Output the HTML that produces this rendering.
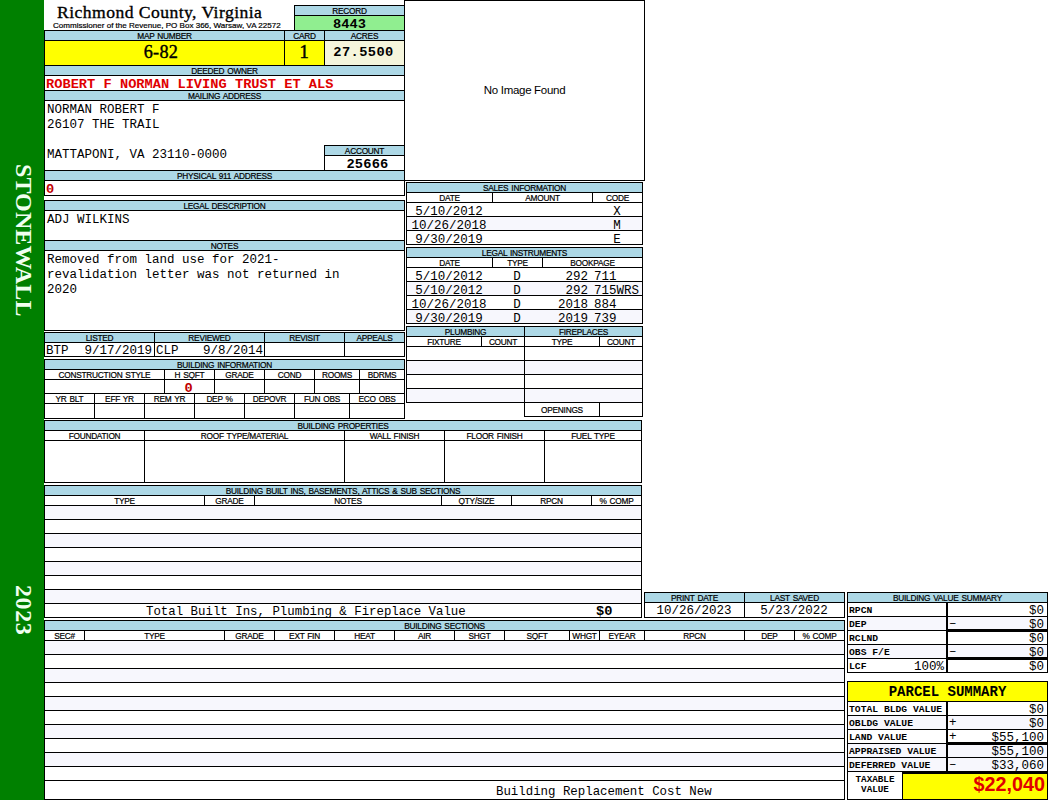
<!DOCTYPE html>
<html><head><meta charset="utf-8"><style>
html,body{margin:0;padding:0;background:#fff;}
body{width:1050px;height:800px;position:relative;overflow:hidden;}
body>div{position:absolute;}
.t{white-space:pre;overflow:visible;}
</style></head><body>
<div style="left:0px;top:0px;width:44px;height:800px;background:#008000"></div>
<div style="left:0;top:160px;width:44px;height:170px;"><div style="position:absolute;left:9.0px;top:4px;writing-mode:vertical-rl;font-family:'Liberation Serif',serif;font-weight:bold;font-size:24px;line-height:30px;color:#f0fff0;letter-spacing:0.1px">STONEWALL</div></div>
<div style="left:0;top:580px;width:44px;height:60px;"><div style="position:absolute;left:9.0px;top:5px;writing-mode:vertical-rl;font-family:'Liberation Serif',serif;font-weight:bold;font-size:24px;line-height:30px;color:#f0fff0;letter-spacing:0.6px">2023</div></div>
<div class="t" style="left:57px;width:243px;top:-3.00px;height:30px;line-height:30px;font-family:'Liberation Serif',serif;font-size:17.6px;font-weight:normal;color:#000;text-align:left;letter-spacing:0.45px;-webkit-text-stroke:0.35px #000">Richmond County, Virginia</div>
<div class="t" style="left:53px;width:247px;top:10.50px;height:30px;line-height:30px;font-family:'Liberation Sans',sans-serif;font-size:8.05px;font-weight:normal;color:#000;text-align:left;-webkit-text-stroke:0.2px #000">Commissioner of the Revenue, PO Box 366, Warsaw, VA 22572</div>
<div style="left:295px;top:6px;width:109px;height:9px;background:#add8e6"></div>
<div style="left:295px;top:16px;width:109px;height:14px;background:#90ee90"></div>
<div style="left:294px;top:5px;width:111px;height:1px;background:#000"></div>
<div style="left:294px;top:30px;width:111px;height:1px;background:#000"></div>
<div style="left:294px;top:5px;width:1px;height:26px;background:#000"></div>
<div style="left:404px;top:5px;width:1px;height:26px;background:#000"></div>
<div style="left:294px;top:15px;width:111px;height:1px;background:#000"></div>
<div class="t" style="left:295px;width:109px;top:-4.00px;height:30px;line-height:30px;font-family:'Liberation Sans',sans-serif;font-size:8.3px;font-weight:normal;color:#000;text-align:center;letter-spacing:-0.25px;word-spacing:0.9px;-webkit-text-stroke:0.2px #000;">RECORD</div>
<div class="t" style="left:295px;width:109px;top:9.50px;height:30px;line-height:30px;font-family:'Liberation Mono',monospace;font-size:13.7px;font-weight:bold;color:#000;text-align:center;">8443</div>
<div style="left:45px;top:31px;width:359px;height:9px;background:#add8e6"></div>
<div style="left:45px;top:41px;width:279px;height:24px;background:#ffff00"></div>
<div style="left:325px;top:41px;width:79px;height:24px;background:#f5f5dc"></div>
<div style="left:44px;top:30px;width:361px;height:1px;background:#000"></div>
<div style="left:44px;top:65px;width:361px;height:1px;background:#000"></div>
<div style="left:44px;top:30px;width:1px;height:36px;background:#000"></div>
<div style="left:404px;top:30px;width:1px;height:36px;background:#000"></div>
<div style="left:44px;top:40px;width:361px;height:1px;background:#000"></div>
<div style="left:284px;top:30px;width:1px;height:36px;background:#000"></div>
<div style="left:324px;top:30px;width:1px;height:36px;background:#000"></div>
<div class="t" style="left:45px;width:239px;top:21.00px;height:30px;line-height:30px;font-family:'Liberation Sans',sans-serif;font-size:8.3px;font-weight:normal;color:#000;text-align:center;letter-spacing:-0.25px;word-spacing:0.9px;-webkit-text-stroke:0.2px #000;">MAP NUMBER</div>
<div class="t" style="left:285px;width:39px;top:21.00px;height:30px;line-height:30px;font-family:'Liberation Sans',sans-serif;font-size:8.3px;font-weight:normal;color:#000;text-align:center;letter-spacing:-0.25px;word-spacing:0.9px;-webkit-text-stroke:0.2px #000;">CARD</div>
<div class="t" style="left:325px;width:79px;top:21.00px;height:30px;line-height:30px;font-family:'Liberation Sans',sans-serif;font-size:8.3px;font-weight:normal;color:#000;text-align:center;letter-spacing:-0.25px;word-spacing:0.9px;-webkit-text-stroke:0.2px #000;">ACRES</div>
<div class="t" style="left:38px;width:246px;top:37.00px;height:30px;line-height:30px;font-family:'Liberation Serif',serif;font-size:18.2px;font-weight:normal;color:#000;text-align:center;letter-spacing:0.3px;-webkit-text-stroke:0.4px #000">6-82</div>
<div class="t" style="left:284px;width:40px;top:37.00px;height:30px;line-height:30px;font-family:'Liberation Serif',serif;font-size:18.5px;font-weight:normal;color:#000;text-align:center;-webkit-text-stroke:0.5px #000">1</div>
<div class="t" style="left:323px;width:81px;top:37.50px;height:30px;line-height:30px;font-family:'Liberation Mono',monospace;font-size:13.7px;font-weight:bold;color:#000;text-align:center;letter-spacing:0.4px">27.5500</div>
<div style="left:45px;top:66px;width:359px;height:9px;background:#add8e6"></div>
<div class="t" style="left:45px;width:359px;top:56.00px;height:30px;line-height:30px;font-family:'Liberation Sans',sans-serif;font-size:8.3px;font-weight:normal;color:#000;text-align:center;letter-spacing:-0.25px;word-spacing:0.9px;-webkit-text-stroke:0.2px #000;">DEEDED OWNER</div>
<div style="left:44px;top:65px;width:361px;height:1px;background:#000"></div>
<div style="left:44px;top:90px;width:361px;height:1px;background:#000"></div>
<div style="left:44px;top:65px;width:1px;height:26px;background:#000"></div>
<div style="left:404px;top:65px;width:1px;height:26px;background:#000"></div>
<div style="left:44px;top:75px;width:361px;height:1px;background:#000"></div>
<div class="t" style="left:46px;width:358px;top:69.50px;height:30px;line-height:30px;font-family:'Liberation Mono',monospace;font-size:13.7px;font-weight:bold;color:#e00000;text-align:left;">ROBERT F NORMAN LIVING TRUST ET ALS</div>
<div style="left:45px;top:91px;width:359px;height:9px;background:#add8e6"></div>
<div class="t" style="left:45px;width:359px;top:81.00px;height:30px;line-height:30px;font-family:'Liberation Sans',sans-serif;font-size:8.3px;font-weight:normal;color:#000;text-align:center;letter-spacing:-0.25px;word-spacing:0.9px;-webkit-text-stroke:0.2px #000;">MAILING ADDRESS</div>
<div style="left:44px;top:90px;width:361px;height:1px;background:#000"></div>
<div style="left:44px;top:170px;width:361px;height:1px;background:#000"></div>
<div style="left:44px;top:90px;width:1px;height:81px;background:#000"></div>
<div style="left:404px;top:90px;width:1px;height:81px;background:#000"></div>
<div style="left:44px;top:100px;width:361px;height:1px;background:#000"></div>
<div class="t" style="left:47px;width:283px;top:95.00px;height:30px;line-height:30px;font-family:'Liberation Mono',monospace;font-size:12.5px;font-weight:normal;color:#000;text-align:left;">NORMAN ROBERT F</div>
<div class="t" style="left:47px;width:283px;top:110.00px;height:30px;line-height:30px;font-family:'Liberation Mono',monospace;font-size:12.5px;font-weight:normal;color:#000;text-align:left;">26107 THE TRAIL</div>
<div class="t" style="left:47px;width:283px;top:125.00px;height:30px;line-height:30px;font-family:'Liberation Mono',monospace;font-size:12.5px;font-weight:normal;color:#000;text-align:left;"></div>
<div class="t" style="left:47px;width:283px;top:140.00px;height:30px;line-height:30px;font-family:'Liberation Mono',monospace;font-size:12.5px;font-weight:normal;color:#000;text-align:left;">MATTAPONI, VA 23110-0000</div>
<div style="left:325px;top:146px;width:79px;height:9px;background:#add8e6"></div>
<div style="left:324px;top:145px;width:81px;height:1px;background:#000"></div>
<div style="left:324px;top:170px;width:81px;height:1px;background:#000"></div>
<div style="left:324px;top:145px;width:1px;height:26px;background:#000"></div>
<div style="left:404px;top:145px;width:1px;height:26px;background:#000"></div>
<div style="left:324px;top:155px;width:81px;height:1px;background:#000"></div>
<div class="t" style="left:325px;width:79px;top:136.00px;height:30px;line-height:30px;font-family:'Liberation Sans',sans-serif;font-size:8.3px;font-weight:normal;color:#000;text-align:center;letter-spacing:-0.25px;word-spacing:0.9px;-webkit-text-stroke:0.2px #000;">ACCOUNT</div>
<div class="t" style="left:331px;width:73px;top:149.50px;height:30px;line-height:30px;font-family:'Liberation Mono',monospace;font-size:13.7px;font-weight:bold;color:#000;text-align:center;letter-spacing:0.2px">25666</div>
<div style="left:45px;top:171px;width:359px;height:9px;background:#add8e6"></div>
<div class="t" style="left:45px;width:359px;top:161.00px;height:30px;line-height:30px;font-family:'Liberation Sans',sans-serif;font-size:8.3px;font-weight:normal;color:#000;text-align:center;letter-spacing:-0.25px;word-spacing:0.9px;-webkit-text-stroke:0.2px #000;">PHYSICAL 911 ADDRESS</div>
<div style="left:44px;top:170px;width:361px;height:1px;background:#000"></div>
<div style="left:44px;top:195px;width:361px;height:1px;background:#000"></div>
<div style="left:44px;top:170px;width:1px;height:26px;background:#000"></div>
<div style="left:404px;top:170px;width:1px;height:26px;background:#000"></div>
<div style="left:44px;top:180px;width:361px;height:1px;background:#000"></div>
<div class="t" style="left:46px;width:54px;top:174.50px;height:30px;line-height:30px;font-family:'Liberation Mono',monospace;font-size:13.7px;font-weight:bold;color:#c00000;text-align:left;">0</div>
<div style="left:45px;top:201px;width:359px;height:9px;background:#add8e6"></div>
<div class="t" style="left:45px;width:359px;top:191.00px;height:30px;line-height:30px;font-family:'Liberation Sans',sans-serif;font-size:8.3px;font-weight:normal;color:#000;text-align:center;letter-spacing:-0.25px;word-spacing:0.9px;-webkit-text-stroke:0.2px #000;">LEGAL DESCRIPTION</div>
<div style="left:44px;top:200px;width:361px;height:1px;background:#000"></div>
<div style="left:44px;top:240px;width:361px;height:1px;background:#000"></div>
<div style="left:44px;top:200px;width:1px;height:41px;background:#000"></div>
<div style="left:404px;top:200px;width:1px;height:41px;background:#000"></div>
<div style="left:44px;top:210px;width:361px;height:1px;background:#000"></div>
<div class="t" style="left:47px;width:357px;top:205.00px;height:30px;line-height:30px;font-family:'Liberation Mono',monospace;font-size:12.5px;font-weight:normal;color:#000;text-align:left;">ADJ WILKINS</div>
<div style="left:45px;top:241px;width:359px;height:9px;background:#add8e6"></div>
<div class="t" style="left:45px;width:359px;top:231.00px;height:30px;line-height:30px;font-family:'Liberation Sans',sans-serif;font-size:8.3px;font-weight:normal;color:#000;text-align:center;letter-spacing:-0.25px;word-spacing:0.9px;-webkit-text-stroke:0.2px #000;">NOTES</div>
<div style="left:44px;top:240px;width:361px;height:1px;background:#000"></div>
<div style="left:44px;top:330px;width:361px;height:1px;background:#000"></div>
<div style="left:44px;top:240px;width:1px;height:91px;background:#000"></div>
<div style="left:404px;top:240px;width:1px;height:91px;background:#000"></div>
<div style="left:44px;top:250px;width:361px;height:1px;background:#000"></div>
<div class="t" style="left:47px;width:357px;top:245.00px;height:30px;line-height:30px;font-family:'Liberation Mono',monospace;font-size:12.5px;font-weight:normal;color:#000;text-align:left;">Removed from land use for 2021-</div>
<div class="t" style="left:47px;width:357px;top:260.00px;height:30px;line-height:30px;font-family:'Liberation Mono',monospace;font-size:12.5px;font-weight:normal;color:#000;text-align:left;">revalidation letter was not returned in</div>
<div class="t" style="left:47px;width:357px;top:275.00px;height:30px;line-height:30px;font-family:'Liberation Mono',monospace;font-size:12.5px;font-weight:normal;color:#000;text-align:left;">2020</div>
<div style="left:45px;top:333px;width:359px;height:9px;background:#add8e6"></div>
<div style="left:44px;top:332px;width:361px;height:1px;background:#000"></div>
<div style="left:44px;top:356px;width:361px;height:1px;background:#000"></div>
<div style="left:44px;top:332px;width:1px;height:25px;background:#000"></div>
<div style="left:404px;top:332px;width:1px;height:25px;background:#000"></div>
<div style="left:44px;top:342px;width:361px;height:1px;background:#000"></div>
<div style="left:154px;top:332px;width:1px;height:25px;background:#000"></div>
<div style="left:264px;top:332px;width:1px;height:25px;background:#000"></div>
<div style="left:344px;top:332px;width:1px;height:25px;background:#000"></div>
<div class="t" style="left:45px;width:109px;top:323.00px;height:30px;line-height:30px;font-family:'Liberation Sans',sans-serif;font-size:8.3px;font-weight:normal;color:#000;text-align:center;letter-spacing:-0.25px;word-spacing:0.9px;-webkit-text-stroke:0.2px #000;">LISTED</div>
<div class="t" style="left:155px;width:109px;top:323.00px;height:30px;line-height:30px;font-family:'Liberation Sans',sans-serif;font-size:8.3px;font-weight:normal;color:#000;text-align:center;letter-spacing:-0.25px;word-spacing:0.9px;-webkit-text-stroke:0.2px #000;">REVIEWED</div>
<div class="t" style="left:265px;width:79px;top:323.00px;height:30px;line-height:30px;font-family:'Liberation Sans',sans-serif;font-size:8.3px;font-weight:normal;color:#000;text-align:center;letter-spacing:-0.25px;word-spacing:0.9px;-webkit-text-stroke:0.2px #000;">REVISIT</div>
<div class="t" style="left:345px;width:59px;top:323.00px;height:30px;line-height:30px;font-family:'Liberation Sans',sans-serif;font-size:8.3px;font-weight:normal;color:#000;text-align:center;letter-spacing:-0.25px;word-spacing:0.9px;-webkit-text-stroke:0.2px #000;">APPEALS</div>
<div class="t" style="left:46px;width:108px;top:336.00px;height:30px;line-height:30px;font-family:'Liberation Mono',monospace;font-size:12.5px;font-weight:normal;color:#000;text-align:left;">BTP</div>
<div class="t" style="left:60px;width:92px;top:336.00px;height:30px;line-height:30px;font-family:'Liberation Mono',monospace;font-size:12.5px;font-weight:normal;color:#000;text-align:right;">9/17/2019</div>
<div class="t" style="left:156px;width:108px;top:336.00px;height:30px;line-height:30px;font-family:'Liberation Mono',monospace;font-size:12.5px;font-weight:normal;color:#000;text-align:left;">CLP</div>
<div class="t" style="left:170px;width:93px;top:336.00px;height:30px;line-height:30px;font-family:'Liberation Mono',monospace;font-size:12.5px;font-weight:normal;color:#000;text-align:right;">9/8/2014</div>
<div style="left:45px;top:360px;width:359px;height:9px;background:#add8e6"></div>
<div class="t" style="left:45px;width:359px;top:350.00px;height:30px;line-height:30px;font-family:'Liberation Sans',sans-serif;font-size:8.3px;font-weight:normal;color:#000;text-align:center;letter-spacing:-0.25px;word-spacing:0.9px;-webkit-text-stroke:0.2px #000;">BUILDING INFORMATION</div>
<div style="left:44px;top:359px;width:361px;height:1px;background:#000"></div>
<div style="left:44px;top:418px;width:361px;height:1px;background:#000"></div>
<div style="left:44px;top:359px;width:1px;height:60px;background:#000"></div>
<div style="left:404px;top:359px;width:1px;height:60px;background:#000"></div>
<div style="left:44px;top:369px;width:361px;height:1px;background:#000"></div>
<div style="left:44px;top:379px;width:361px;height:1px;background:#000"></div>
<div style="left:44px;top:393px;width:361px;height:1px;background:#000"></div>
<div style="left:44px;top:403px;width:361px;height:1px;background:#000"></div>
<div style="left:164px;top:369px;width:1px;height:25px;background:#000"></div>
<div style="left:214px;top:369px;width:1px;height:25px;background:#000"></div>
<div style="left:264px;top:369px;width:1px;height:25px;background:#000"></div>
<div style="left:314px;top:369px;width:1px;height:25px;background:#000"></div>
<div style="left:359px;top:369px;width:1px;height:25px;background:#000"></div>
<div style="left:94px;top:393px;width:1px;height:26px;background:#000"></div>
<div style="left:144px;top:393px;width:1px;height:26px;background:#000"></div>
<div style="left:194px;top:393px;width:1px;height:26px;background:#000"></div>
<div style="left:244px;top:393px;width:1px;height:26px;background:#000"></div>
<div style="left:294px;top:393px;width:1px;height:26px;background:#000"></div>
<div style="left:349px;top:393px;width:1px;height:26px;background:#000"></div>
<div class="t" style="left:45px;width:119px;top:360.00px;height:30px;line-height:30px;font-family:'Liberation Sans',sans-serif;font-size:8.3px;font-weight:normal;color:#000;text-align:center;letter-spacing:-0.25px;word-spacing:0.9px;-webkit-text-stroke:0.2px #000;">CONSTRUCTION STYLE</div>
<div class="t" style="left:165px;width:49px;top:360.00px;height:30px;line-height:30px;font-family:'Liberation Sans',sans-serif;font-size:8.3px;font-weight:normal;color:#000;text-align:center;letter-spacing:-0.25px;word-spacing:0.9px;-webkit-text-stroke:0.2px #000;">H SQFT</div>
<div class="t" style="left:215px;width:49px;top:360.00px;height:30px;line-height:30px;font-family:'Liberation Sans',sans-serif;font-size:8.3px;font-weight:normal;color:#000;text-align:center;letter-spacing:-0.25px;word-spacing:0.9px;-webkit-text-stroke:0.2px #000;">GRADE</div>
<div class="t" style="left:265px;width:49px;top:360.00px;height:30px;line-height:30px;font-family:'Liberation Sans',sans-serif;font-size:8.3px;font-weight:normal;color:#000;text-align:center;letter-spacing:-0.25px;word-spacing:0.9px;-webkit-text-stroke:0.2px #000;">COND</div>
<div class="t" style="left:315px;width:44px;top:360.00px;height:30px;line-height:30px;font-family:'Liberation Sans',sans-serif;font-size:8.3px;font-weight:normal;color:#000;text-align:center;letter-spacing:-0.25px;word-spacing:0.9px;-webkit-text-stroke:0.2px #000;">ROOMS</div>
<div class="t" style="left:360px;width:44px;top:360.00px;height:30px;line-height:30px;font-family:'Liberation Sans',sans-serif;font-size:8.3px;font-weight:normal;color:#000;text-align:center;letter-spacing:-0.25px;word-spacing:0.9px;-webkit-text-stroke:0.2px #000;">BDRMS</div>
<div class="t" style="left:45px;width:49px;top:384.00px;height:30px;line-height:30px;font-family:'Liberation Sans',sans-serif;font-size:8.3px;font-weight:normal;color:#000;text-align:center;letter-spacing:-0.25px;word-spacing:0.9px;-webkit-text-stroke:0.2px #000;">YR BLT</div>
<div class="t" style="left:95px;width:49px;top:384.00px;height:30px;line-height:30px;font-family:'Liberation Sans',sans-serif;font-size:8.3px;font-weight:normal;color:#000;text-align:center;letter-spacing:-0.25px;word-spacing:0.9px;-webkit-text-stroke:0.2px #000;">EFF YR</div>
<div class="t" style="left:145px;width:49px;top:384.00px;height:30px;line-height:30px;font-family:'Liberation Sans',sans-serif;font-size:8.3px;font-weight:normal;color:#000;text-align:center;letter-spacing:-0.25px;word-spacing:0.9px;-webkit-text-stroke:0.2px #000;">REM YR</div>
<div class="t" style="left:195px;width:49px;top:384.00px;height:30px;line-height:30px;font-family:'Liberation Sans',sans-serif;font-size:8.3px;font-weight:normal;color:#000;text-align:center;letter-spacing:-0.25px;word-spacing:0.9px;-webkit-text-stroke:0.2px #000;">DEP %</div>
<div class="t" style="left:245px;width:49px;top:384.00px;height:30px;line-height:30px;font-family:'Liberation Sans',sans-serif;font-size:8.3px;font-weight:normal;color:#000;text-align:center;letter-spacing:-0.25px;word-spacing:0.9px;-webkit-text-stroke:0.2px #000;">DEPOVR</div>
<div class="t" style="left:295px;width:54px;top:384.00px;height:30px;line-height:30px;font-family:'Liberation Sans',sans-serif;font-size:8.3px;font-weight:normal;color:#000;text-align:center;letter-spacing:-0.25px;word-spacing:0.9px;-webkit-text-stroke:0.2px #000;">FUN OBS</div>
<div class="t" style="left:350px;width:54px;top:384.00px;height:30px;line-height:30px;font-family:'Liberation Sans',sans-serif;font-size:8.3px;font-weight:normal;color:#000;text-align:center;letter-spacing:-0.25px;word-spacing:0.9px;-webkit-text-stroke:0.2px #000;">ECO OBS</div>
<div class="t" style="left:163px;width:51px;top:373.50px;height:30px;line-height:30px;font-family:'Liberation Mono',monospace;font-size:13.7px;font-weight:bold;color:#c00000;text-align:center;">0</div>
<div style="left:404px;top:0px;width:241px;height:1px;background:#000"></div>
<div style="left:404px;top:180px;width:241px;height:1px;background:#000"></div>
<div style="left:404px;top:0px;width:1px;height:181px;background:#000"></div>
<div style="left:644px;top:0px;width:1px;height:181px;background:#000"></div>
<div class="t" style="left:405px;width:239px;top:75.00px;height:30px;line-height:30px;font-family:'Liberation Sans',sans-serif;font-size:11.5px;font-weight:normal;color:#000;text-align:center;letter-spacing:-0.3px">No Image Found</div>
<div style="left:407px;top:193px;width:235px;height:9px;background:#fff"></div>
<div style="left:407px;top:217px;width:235px;height:13px;background:#f7f7fd"></div>
<div style="left:407px;top:183px;width:235px;height:9px;background:#add8e6"></div>
<div class="t" style="left:407px;width:235px;top:173.00px;height:30px;line-height:30px;font-family:'Liberation Sans',sans-serif;font-size:8.3px;font-weight:normal;color:#000;text-align:center;letter-spacing:-0.25px;word-spacing:0.9px;-webkit-text-stroke:0.2px #000;">SALES INFORMATION</div>
<div style="left:406px;top:182px;width:237px;height:1px;background:#000"></div>
<div style="left:406px;top:244px;width:237px;height:1px;background:#000"></div>
<div style="left:406px;top:182px;width:1px;height:63px;background:#000"></div>
<div style="left:642px;top:182px;width:1px;height:63px;background:#000"></div>
<div style="left:406px;top:192px;width:237px;height:1px;background:#000"></div>
<div style="left:406px;top:202px;width:237px;height:1px;background:#000"></div>
<div style="left:406px;top:216px;width:237px;height:1px;background:#000"></div>
<div style="left:406px;top:230px;width:237px;height:1px;background:#000"></div>
<div style="left:492px;top:192px;width:1px;height:11px;background:#000"></div>
<div style="left:592px;top:192px;width:1px;height:11px;background:#000"></div>
<div class="t" style="left:407px;width:85px;top:183.00px;height:30px;line-height:30px;font-family:'Liberation Sans',sans-serif;font-size:8.3px;font-weight:normal;color:#000;text-align:center;letter-spacing:-0.25px;word-spacing:0.9px;-webkit-text-stroke:0.2px #000;">DATE</div>
<div class="t" style="left:493px;width:99px;top:183.00px;height:30px;line-height:30px;font-family:'Liberation Sans',sans-serif;font-size:8.3px;font-weight:normal;color:#000;text-align:center;letter-spacing:-0.25px;word-spacing:0.9px;-webkit-text-stroke:0.2px #000;">AMOUNT</div>
<div class="t" style="left:593px;width:49px;top:183.00px;height:30px;line-height:30px;font-family:'Liberation Sans',sans-serif;font-size:8.3px;font-weight:normal;color:#000;text-align:center;letter-spacing:-0.25px;word-spacing:0.9px;-webkit-text-stroke:0.2px #000;">CODE</div>
<div class="t" style="left:406px;width:86px;top:197.00px;height:30px;line-height:30px;font-family:'Liberation Mono',monospace;font-size:12.5px;font-weight:normal;color:#000;text-align:center;">5/10/2012</div>
<div class="t" style="left:592px;width:50px;top:197.00px;height:30px;line-height:30px;font-family:'Liberation Mono',monospace;font-size:12.5px;font-weight:normal;color:#000;text-align:center;">X</div>
<div class="t" style="left:406px;width:86px;top:211.00px;height:30px;line-height:30px;font-family:'Liberation Mono',monospace;font-size:12.5px;font-weight:normal;color:#000;text-align:center;">10/26/2018</div>
<div class="t" style="left:592px;width:50px;top:211.00px;height:30px;line-height:30px;font-family:'Liberation Mono',monospace;font-size:12.5px;font-weight:normal;color:#000;text-align:center;">M</div>
<div class="t" style="left:406px;width:86px;top:225.00px;height:30px;line-height:30px;font-family:'Liberation Mono',monospace;font-size:12.5px;font-weight:normal;color:#000;text-align:center;">9/30/2019</div>
<div class="t" style="left:592px;width:50px;top:225.00px;height:30px;line-height:30px;font-family:'Liberation Mono',monospace;font-size:12.5px;font-weight:normal;color:#000;text-align:center;">E</div>
<div style="left:407px;top:282px;width:235px;height:13px;background:#f7f7fd"></div>
<div style="left:407px;top:310px;width:235px;height:13px;background:#f7f7fd"></div>
<div style="left:407px;top:248px;width:235px;height:9px;background:#add8e6"></div>
<div class="t" style="left:407px;width:235px;top:238.00px;height:30px;line-height:30px;font-family:'Liberation Sans',sans-serif;font-size:8.3px;font-weight:normal;color:#000;text-align:center;letter-spacing:-0.25px;word-spacing:0.9px;-webkit-text-stroke:0.2px #000;">LEGAL INSTRUMENTS</div>
<div style="left:406px;top:247px;width:237px;height:1px;background:#000"></div>
<div style="left:406px;top:323px;width:237px;height:1px;background:#000"></div>
<div style="left:406px;top:247px;width:1px;height:77px;background:#000"></div>
<div style="left:642px;top:247px;width:1px;height:77px;background:#000"></div>
<div style="left:406px;top:257px;width:237px;height:1px;background:#000"></div>
<div style="left:406px;top:267px;width:237px;height:1px;background:#000"></div>
<div style="left:406px;top:281px;width:237px;height:1px;background:#000"></div>
<div style="left:406px;top:295px;width:237px;height:1px;background:#000"></div>
<div style="left:406px;top:309px;width:237px;height:1px;background:#000"></div>
<div style="left:492px;top:257px;width:1px;height:11px;background:#000"></div>
<div style="left:542px;top:257px;width:1px;height:11px;background:#000"></div>
<div class="t" style="left:407px;width:85px;top:248.00px;height:30px;line-height:30px;font-family:'Liberation Sans',sans-serif;font-size:8.3px;font-weight:normal;color:#000;text-align:center;letter-spacing:-0.25px;word-spacing:0.9px;-webkit-text-stroke:0.2px #000;">DATE</div>
<div class="t" style="left:493px;width:49px;top:248.00px;height:30px;line-height:30px;font-family:'Liberation Sans',sans-serif;font-size:8.3px;font-weight:normal;color:#000;text-align:center;letter-spacing:-0.25px;word-spacing:0.9px;-webkit-text-stroke:0.2px #000;">TYPE</div>
<div class="t" style="left:543px;width:99px;top:248.00px;height:30px;line-height:30px;font-family:'Liberation Sans',sans-serif;font-size:8.3px;font-weight:normal;color:#000;text-align:center;letter-spacing:-0.25px;word-spacing:0.9px;-webkit-text-stroke:0.2px #000;">BOOKPAGE</div>
<div class="t" style="left:406px;width:86px;top:262.00px;height:30px;line-height:30px;font-family:'Liberation Mono',monospace;font-size:12.5px;font-weight:normal;color:#000;text-align:center;">5/10/2012</div>
<div class="t" style="left:492px;width:50px;top:262.00px;height:30px;line-height:30px;font-family:'Liberation Mono',monospace;font-size:12.5px;font-weight:normal;color:#000;text-align:center;">D</div>
<div class="t" style="left:500px;width:88px;top:262.00px;height:30px;line-height:30px;font-family:'Liberation Mono',monospace;font-size:12.5px;font-weight:normal;color:#000;text-align:right;">292</div>
<div class="t" style="left:594px;width:66px;top:262.00px;height:30px;line-height:30px;font-family:'Liberation Mono',monospace;font-size:12.5px;font-weight:normal;color:#000;text-align:left;">711</div>
<div class="t" style="left:406px;width:86px;top:276.00px;height:30px;line-height:30px;font-family:'Liberation Mono',monospace;font-size:12.5px;font-weight:normal;color:#000;text-align:center;">5/10/2012</div>
<div class="t" style="left:492px;width:50px;top:276.00px;height:30px;line-height:30px;font-family:'Liberation Mono',monospace;font-size:12.5px;font-weight:normal;color:#000;text-align:center;">D</div>
<div class="t" style="left:500px;width:88px;top:276.00px;height:30px;line-height:30px;font-family:'Liberation Mono',monospace;font-size:12.5px;font-weight:normal;color:#000;text-align:right;">292</div>
<div class="t" style="left:594px;width:66px;top:276.00px;height:30px;line-height:30px;font-family:'Liberation Mono',monospace;font-size:12.5px;font-weight:normal;color:#000;text-align:left;">715WRS</div>
<div class="t" style="left:406px;width:86px;top:290.00px;height:30px;line-height:30px;font-family:'Liberation Mono',monospace;font-size:12.5px;font-weight:normal;color:#000;text-align:center;">10/26/2018</div>
<div class="t" style="left:492px;width:50px;top:290.00px;height:30px;line-height:30px;font-family:'Liberation Mono',monospace;font-size:12.5px;font-weight:normal;color:#000;text-align:center;">D</div>
<div class="t" style="left:500px;width:88px;top:290.00px;height:30px;line-height:30px;font-family:'Liberation Mono',monospace;font-size:12.5px;font-weight:normal;color:#000;text-align:right;">2018</div>
<div class="t" style="left:594px;width:66px;top:290.00px;height:30px;line-height:30px;font-family:'Liberation Mono',monospace;font-size:12.5px;font-weight:normal;color:#000;text-align:left;">884</div>
<div class="t" style="left:406px;width:86px;top:304.00px;height:30px;line-height:30px;font-family:'Liberation Mono',monospace;font-size:12.5px;font-weight:normal;color:#000;text-align:center;">9/30/2019</div>
<div class="t" style="left:492px;width:50px;top:304.00px;height:30px;line-height:30px;font-family:'Liberation Mono',monospace;font-size:12.5px;font-weight:normal;color:#000;text-align:center;">D</div>
<div class="t" style="left:500px;width:88px;top:304.00px;height:30px;line-height:30px;font-family:'Liberation Mono',monospace;font-size:12.5px;font-weight:normal;color:#000;text-align:right;">2019</div>
<div class="t" style="left:594px;width:66px;top:304.00px;height:30px;line-height:30px;font-family:'Liberation Mono',monospace;font-size:12.5px;font-weight:normal;color:#000;text-align:left;">739</div>
<div style="left:407px;top:361px;width:235px;height:13px;background:#f7f7fd"></div>
<div style="left:407px;top:389px;width:235px;height:13px;background:#f7f7fd"></div>
<div style="left:407px;top:327px;width:235px;height:9px;background:#add8e6"></div>
<div style="left:406px;top:326px;width:237px;height:1px;background:#000"></div>
<div style="left:406px;top:336px;width:237px;height:1px;background:#000"></div>
<div style="left:406px;top:346px;width:237px;height:1px;background:#000"></div>
<div style="left:406px;top:360px;width:237px;height:1px;background:#000"></div>
<div style="left:406px;top:374px;width:237px;height:1px;background:#000"></div>
<div style="left:406px;top:388px;width:237px;height:1px;background:#000"></div>
<div style="left:406px;top:402px;width:237px;height:1px;background:#000"></div>
<div style="left:524px;top:416px;width:119px;height:1px;background:#000"></div>
<div style="left:406px;top:326px;width:1px;height:77px;background:#000"></div>
<div style="left:524px;top:326px;width:1px;height:91px;background:#000"></div>
<div style="left:642px;top:326px;width:1px;height:91px;background:#000"></div>
<div style="left:481px;top:336px;width:1px;height:11px;background:#000"></div>
<div style="left:599px;top:336px;width:1px;height:11px;background:#000"></div>
<div style="left:599px;top:402px;width:1px;height:15px;background:#000"></div>
<div class="t" style="left:407px;width:117px;top:317.00px;height:30px;line-height:30px;font-family:'Liberation Sans',sans-serif;font-size:8.3px;font-weight:normal;color:#000;text-align:center;letter-spacing:-0.25px;word-spacing:0.9px;-webkit-text-stroke:0.2px #000;">PLUMBING</div>
<div class="t" style="left:525px;width:117px;top:317.00px;height:30px;line-height:30px;font-family:'Liberation Sans',sans-serif;font-size:8.3px;font-weight:normal;color:#000;text-align:center;letter-spacing:-0.25px;word-spacing:0.9px;-webkit-text-stroke:0.2px #000;">FIREPLACES</div>
<div class="t" style="left:407px;width:74px;top:327.00px;height:30px;line-height:30px;font-family:'Liberation Sans',sans-serif;font-size:8.3px;font-weight:normal;color:#000;text-align:center;letter-spacing:-0.25px;word-spacing:0.9px;-webkit-text-stroke:0.2px #000;">FIXTURE</div>
<div class="t" style="left:482px;width:42px;top:327.00px;height:30px;line-height:30px;font-family:'Liberation Sans',sans-serif;font-size:8.3px;font-weight:normal;color:#000;text-align:center;letter-spacing:-0.25px;word-spacing:0.9px;-webkit-text-stroke:0.2px #000;">COUNT</div>
<div class="t" style="left:525px;width:74px;top:327.00px;height:30px;line-height:30px;font-family:'Liberation Sans',sans-serif;font-size:8.3px;font-weight:normal;color:#000;text-align:center;letter-spacing:-0.25px;word-spacing:0.9px;-webkit-text-stroke:0.2px #000;">TYPE</div>
<div class="t" style="left:600px;width:42px;top:327.00px;height:30px;line-height:30px;font-family:'Liberation Sans',sans-serif;font-size:8.3px;font-weight:normal;color:#000;text-align:center;letter-spacing:-0.25px;word-spacing:0.9px;-webkit-text-stroke:0.2px #000;">COUNT</div>
<div class="t" style="left:525px;width:74px;top:395.00px;height:30px;line-height:30px;font-family:'Liberation Sans',sans-serif;font-size:8.3px;font-weight:normal;color:#000;text-align:center;letter-spacing:-0.25px;word-spacing:0.9px;-webkit-text-stroke:0.2px #000;">OPENINGS</div>
<div style="left:45px;top:421px;width:596px;height:9px;background:#add8e6"></div>
<div class="t" style="left:45px;width:596px;top:411.00px;height:30px;line-height:30px;font-family:'Liberation Sans',sans-serif;font-size:8.3px;font-weight:normal;color:#000;text-align:center;letter-spacing:-0.25px;word-spacing:0.9px;-webkit-text-stroke:0.2px #000;">BUILDING PROPERTIES</div>
<div style="left:44px;top:420px;width:598px;height:1px;background:#000"></div>
<div style="left:44px;top:482px;width:598px;height:1px;background:#000"></div>
<div style="left:44px;top:420px;width:1px;height:63px;background:#000"></div>
<div style="left:641px;top:420px;width:1px;height:63px;background:#000"></div>
<div style="left:44px;top:430px;width:598px;height:1px;background:#000"></div>
<div style="left:44px;top:440px;width:598px;height:1px;background:#000"></div>
<div style="left:144px;top:430px;width:1px;height:53px;background:#000"></div>
<div style="left:344px;top:430px;width:1px;height:53px;background:#000"></div>
<div style="left:444px;top:430px;width:1px;height:53px;background:#000"></div>
<div style="left:544px;top:430px;width:1px;height:53px;background:#000"></div>
<div class="t" style="left:45px;width:99px;top:421.00px;height:30px;line-height:30px;font-family:'Liberation Sans',sans-serif;font-size:8.3px;font-weight:normal;color:#000;text-align:center;letter-spacing:-0.25px;word-spacing:0.9px;-webkit-text-stroke:0.2px #000;">FOUNDATION</div>
<div class="t" style="left:145px;width:199px;top:421.00px;height:30px;line-height:30px;font-family:'Liberation Sans',sans-serif;font-size:8.3px;font-weight:normal;color:#000;text-align:center;letter-spacing:-0.25px;word-spacing:0.9px;-webkit-text-stroke:0.2px #000;">ROOF TYPE/MATERIAL</div>
<div class="t" style="left:345px;width:99px;top:421.00px;height:30px;line-height:30px;font-family:'Liberation Sans',sans-serif;font-size:8.3px;font-weight:normal;color:#000;text-align:center;letter-spacing:-0.25px;word-spacing:0.9px;-webkit-text-stroke:0.2px #000;">WALL FINISH</div>
<div class="t" style="left:445px;width:99px;top:421.00px;height:30px;line-height:30px;font-family:'Liberation Sans',sans-serif;font-size:8.3px;font-weight:normal;color:#000;text-align:center;letter-spacing:-0.25px;word-spacing:0.9px;-webkit-text-stroke:0.2px #000;">FLOOR FINISH</div>
<div class="t" style="left:545px;width:96px;top:421.00px;height:30px;line-height:30px;font-family:'Liberation Sans',sans-serif;font-size:8.3px;font-weight:normal;color:#000;text-align:center;letter-spacing:-0.25px;word-spacing:0.9px;-webkit-text-stroke:0.2px #000;">FUEL TYPE</div>
<div style="left:45px;top:506px;width:596px;height:13px;background:#f7f7fd"></div>
<div style="left:45px;top:534px;width:596px;height:13px;background:#f7f7fd"></div>
<div style="left:45px;top:562px;width:596px;height:13px;background:#f7f7fd"></div>
<div style="left:45px;top:590px;width:596px;height:13px;background:#f7f7fd"></div>
<div style="left:45px;top:486px;width:596px;height:9px;background:#add8e6"></div>
<div class="t" style="left:45px;width:596px;top:476.00px;height:30px;line-height:30px;font-family:'Liberation Sans',sans-serif;font-size:8.3px;font-weight:normal;color:#000;text-align:center;letter-spacing:-0.25px;word-spacing:0.9px;-webkit-text-stroke:0.2px #000;">BUILDING BUILT INS, BASEMENTS, ATTICS &amp; SUB SECTIONS</div>
<div style="left:44px;top:485px;width:598px;height:1px;background:#000"></div>
<div style="left:44px;top:617px;width:598px;height:1px;background:#000"></div>
<div style="left:44px;top:485px;width:1px;height:133px;background:#000"></div>
<div style="left:641px;top:485px;width:1px;height:133px;background:#000"></div>
<div style="left:44px;top:495px;width:598px;height:1px;background:#000"></div>
<div style="left:44px;top:505px;width:598px;height:1px;background:#000"></div>
<div style="left:44px;top:519px;width:598px;height:1px;background:#000"></div>
<div style="left:44px;top:533px;width:598px;height:1px;background:#000"></div>
<div style="left:44px;top:547px;width:598px;height:1px;background:#000"></div>
<div style="left:44px;top:561px;width:598px;height:1px;background:#000"></div>
<div style="left:44px;top:575px;width:598px;height:1px;background:#000"></div>
<div style="left:44px;top:589px;width:598px;height:1px;background:#000"></div>
<div style="left:44px;top:603px;width:598px;height:1px;background:#000"></div>
<div style="left:204px;top:495px;width:1px;height:11px;background:#000"></div>
<div style="left:254px;top:495px;width:1px;height:11px;background:#000"></div>
<div style="left:441px;top:495px;width:1px;height:11px;background:#000"></div>
<div style="left:511px;top:495px;width:1px;height:11px;background:#000"></div>
<div style="left:591px;top:495px;width:1px;height:11px;background:#000"></div>
<div class="t" style="left:45px;width:159px;top:486.00px;height:30px;line-height:30px;font-family:'Liberation Sans',sans-serif;font-size:8.3px;font-weight:normal;color:#000;text-align:center;letter-spacing:-0.25px;word-spacing:0.9px;-webkit-text-stroke:0.2px #000;">TYPE</div>
<div class="t" style="left:205px;width:49px;top:486.00px;height:30px;line-height:30px;font-family:'Liberation Sans',sans-serif;font-size:8.3px;font-weight:normal;color:#000;text-align:center;letter-spacing:-0.25px;word-spacing:0.9px;-webkit-text-stroke:0.2px #000;">GRADE</div>
<div class="t" style="left:255px;width:186px;top:486.00px;height:30px;line-height:30px;font-family:'Liberation Sans',sans-serif;font-size:8.3px;font-weight:normal;color:#000;text-align:center;letter-spacing:-0.25px;word-spacing:0.9px;-webkit-text-stroke:0.2px #000;">NOTES</div>
<div class="t" style="left:442px;width:69px;top:486.00px;height:30px;line-height:30px;font-family:'Liberation Sans',sans-serif;font-size:8.3px;font-weight:normal;color:#000;text-align:center;letter-spacing:-0.25px;word-spacing:0.9px;-webkit-text-stroke:0.2px #000;">QTY/SIZE</div>
<div class="t" style="left:512px;width:79px;top:486.00px;height:30px;line-height:30px;font-family:'Liberation Sans',sans-serif;font-size:8.3px;font-weight:normal;color:#000;text-align:center;letter-spacing:-0.25px;word-spacing:0.9px;-webkit-text-stroke:0.2px #000;">RPCN</div>
<div class="t" style="left:592px;width:49px;top:486.00px;height:30px;line-height:30px;font-family:'Liberation Sans',sans-serif;font-size:8.3px;font-weight:normal;color:#000;text-align:center;letter-spacing:-0.25px;word-spacing:0.9px;-webkit-text-stroke:0.2px #000;">% COMP</div>
<div class="t" style="left:146px;width:454px;top:597.00px;height:30px;line-height:30px;font-family:'Liberation Mono',monospace;font-size:12.4px;font-weight:normal;color:#000;text-align:left;">Total Built Ins, Plumbing &amp; Fireplace Value</div>
<div class="t" style="left:596px;width:45px;top:596.50px;height:30px;line-height:30px;font-family:'Liberation Mono',monospace;font-size:13.7px;font-weight:bold;color:#000;text-align:left;">$0</div>
<div style="left:645px;top:593px;width:199px;height:9px;background:#add8e6"></div>
<div style="left:644px;top:592px;width:201px;height:1px;background:#000"></div>
<div style="left:644px;top:617px;width:201px;height:1px;background:#000"></div>
<div style="left:644px;top:592px;width:1px;height:26px;background:#000"></div>
<div style="left:844px;top:592px;width:1px;height:26px;background:#000"></div>
<div style="left:644px;top:602px;width:201px;height:1px;background:#000"></div>
<div style="left:744px;top:592px;width:1px;height:26px;background:#000"></div>
<div class="t" style="left:645px;width:99px;top:583.00px;height:30px;line-height:30px;font-family:'Liberation Sans',sans-serif;font-size:8.3px;font-weight:normal;color:#000;text-align:center;letter-spacing:-0.25px;word-spacing:0.9px;-webkit-text-stroke:0.2px #000;">PRINT DATE</div>
<div class="t" style="left:745px;width:99px;top:583.00px;height:30px;line-height:30px;font-family:'Liberation Sans',sans-serif;font-size:8.3px;font-weight:normal;color:#000;text-align:center;letter-spacing:-0.25px;word-spacing:0.9px;-webkit-text-stroke:0.2px #000;">LAST SAVED</div>
<div class="t" style="left:644px;width:100px;top:596.00px;height:30px;line-height:30px;font-family:'Liberation Mono',monospace;font-size:12.5px;font-weight:normal;color:#000;text-align:center;">10/26/2023</div>
<div class="t" style="left:744px;width:100px;top:596.00px;height:30px;line-height:30px;font-family:'Liberation Mono',monospace;font-size:12.5px;font-weight:normal;color:#000;text-align:center;">5/23/2022</div>
<div style="left:45px;top:641px;width:799px;height:13px;background:#f7f7fd"></div>
<div style="left:45px;top:669px;width:799px;height:13px;background:#f7f7fd"></div>
<div style="left:45px;top:697px;width:799px;height:13px;background:#f7f7fd"></div>
<div style="left:45px;top:725px;width:799px;height:13px;background:#f7f7fd"></div>
<div style="left:45px;top:753px;width:799px;height:13px;background:#f7f7fd"></div>
<div style="left:45px;top:621px;width:799px;height:9px;background:#add8e6"></div>
<div class="t" style="left:45px;width:799px;top:611.00px;height:30px;line-height:30px;font-family:'Liberation Sans',sans-serif;font-size:8.3px;font-weight:normal;color:#000;text-align:center;letter-spacing:-0.25px;word-spacing:0.9px;-webkit-text-stroke:0.2px #000;">BUILDING SECTIONS</div>
<div style="left:44px;top:620px;width:801px;height:1px;background:#000"></div>
<div style="left:44px;top:799px;width:801px;height:1px;background:#000"></div>
<div style="left:44px;top:620px;width:1px;height:180px;background:#000"></div>
<div style="left:844px;top:620px;width:1px;height:180px;background:#000"></div>
<div style="left:44px;top:630px;width:801px;height:1px;background:#000"></div>
<div style="left:44px;top:640px;width:801px;height:1px;background:#000"></div>
<div style="left:44px;top:654px;width:801px;height:1px;background:#000"></div>
<div style="left:44px;top:668px;width:801px;height:1px;background:#000"></div>
<div style="left:44px;top:682px;width:801px;height:1px;background:#000"></div>
<div style="left:44px;top:696px;width:801px;height:1px;background:#000"></div>
<div style="left:44px;top:710px;width:801px;height:1px;background:#000"></div>
<div style="left:44px;top:724px;width:801px;height:1px;background:#000"></div>
<div style="left:44px;top:738px;width:801px;height:1px;background:#000"></div>
<div style="left:44px;top:752px;width:801px;height:1px;background:#000"></div>
<div style="left:44px;top:766px;width:801px;height:1px;background:#000"></div>
<div style="left:44px;top:780px;width:801px;height:1px;background:#000"></div>
<div style="left:84px;top:630px;width:1px;height:11px;background:#000"></div>
<div style="left:224px;top:630px;width:1px;height:11px;background:#000"></div>
<div style="left:274px;top:630px;width:1px;height:11px;background:#000"></div>
<div style="left:334px;top:630px;width:1px;height:11px;background:#000"></div>
<div style="left:394px;top:630px;width:1px;height:11px;background:#000"></div>
<div style="left:454px;top:630px;width:1px;height:11px;background:#000"></div>
<div style="left:504px;top:630px;width:1px;height:11px;background:#000"></div>
<div style="left:569px;top:630px;width:1px;height:11px;background:#000"></div>
<div style="left:599px;top:630px;width:1px;height:11px;background:#000"></div>
<div style="left:644px;top:630px;width:1px;height:11px;background:#000"></div>
<div style="left:744px;top:630px;width:1px;height:11px;background:#000"></div>
<div style="left:794px;top:630px;width:1px;height:11px;background:#000"></div>
<div class="t" style="left:45px;width:39px;top:621.00px;height:30px;line-height:30px;font-family:'Liberation Sans',sans-serif;font-size:8.3px;font-weight:normal;color:#000;text-align:center;letter-spacing:-0.25px;word-spacing:0.9px;-webkit-text-stroke:0.2px #000;">SEC#</div>
<div class="t" style="left:85px;width:139px;top:621.00px;height:30px;line-height:30px;font-family:'Liberation Sans',sans-serif;font-size:8.3px;font-weight:normal;color:#000;text-align:center;letter-spacing:-0.25px;word-spacing:0.9px;-webkit-text-stroke:0.2px #000;">TYPE</div>
<div class="t" style="left:225px;width:49px;top:621.00px;height:30px;line-height:30px;font-family:'Liberation Sans',sans-serif;font-size:8.3px;font-weight:normal;color:#000;text-align:center;letter-spacing:-0.25px;word-spacing:0.9px;-webkit-text-stroke:0.2px #000;">GRADE</div>
<div class="t" style="left:275px;width:59px;top:621.00px;height:30px;line-height:30px;font-family:'Liberation Sans',sans-serif;font-size:8.3px;font-weight:normal;color:#000;text-align:center;letter-spacing:-0.25px;word-spacing:0.9px;-webkit-text-stroke:0.2px #000;">EXT FIN</div>
<div class="t" style="left:335px;width:59px;top:621.00px;height:30px;line-height:30px;font-family:'Liberation Sans',sans-serif;font-size:8.3px;font-weight:normal;color:#000;text-align:center;letter-spacing:-0.25px;word-spacing:0.9px;-webkit-text-stroke:0.2px #000;">HEAT</div>
<div class="t" style="left:395px;width:59px;top:621.00px;height:30px;line-height:30px;font-family:'Liberation Sans',sans-serif;font-size:8.3px;font-weight:normal;color:#000;text-align:center;letter-spacing:-0.25px;word-spacing:0.9px;-webkit-text-stroke:0.2px #000;">AIR</div>
<div class="t" style="left:455px;width:49px;top:621.00px;height:30px;line-height:30px;font-family:'Liberation Sans',sans-serif;font-size:8.3px;font-weight:normal;color:#000;text-align:center;letter-spacing:-0.25px;word-spacing:0.9px;-webkit-text-stroke:0.2px #000;">SHGT</div>
<div class="t" style="left:505px;width:64px;top:621.00px;height:30px;line-height:30px;font-family:'Liberation Sans',sans-serif;font-size:8.3px;font-weight:normal;color:#000;text-align:center;letter-spacing:-0.25px;word-spacing:0.9px;-webkit-text-stroke:0.2px #000;">SQFT</div>
<div class="t" style="left:570px;width:29px;top:621.00px;height:30px;line-height:30px;font-family:'Liberation Sans',sans-serif;font-size:8.3px;font-weight:normal;color:#000;text-align:center;letter-spacing:-0.25px;word-spacing:0.9px;-webkit-text-stroke:0.2px #000;">WHGT</div>
<div class="t" style="left:600px;width:44px;top:621.00px;height:30px;line-height:30px;font-family:'Liberation Sans',sans-serif;font-size:8.3px;font-weight:normal;color:#000;text-align:center;letter-spacing:-0.25px;word-spacing:0.9px;-webkit-text-stroke:0.2px #000;">EYEAR</div>
<div class="t" style="left:645px;width:99px;top:621.00px;height:30px;line-height:30px;font-family:'Liberation Sans',sans-serif;font-size:8.3px;font-weight:normal;color:#000;text-align:center;letter-spacing:-0.25px;word-spacing:0.9px;-webkit-text-stroke:0.2px #000;">RPCN</div>
<div class="t" style="left:745px;width:49px;top:621.00px;height:30px;line-height:30px;font-family:'Liberation Sans',sans-serif;font-size:8.3px;font-weight:normal;color:#000;text-align:center;letter-spacing:-0.25px;word-spacing:0.9px;-webkit-text-stroke:0.2px #000;">DEP</div>
<div class="t" style="left:795px;width:49px;top:621.00px;height:30px;line-height:30px;font-family:'Liberation Sans',sans-serif;font-size:8.3px;font-weight:normal;color:#000;text-align:center;letter-spacing:-0.25px;word-spacing:0.9px;-webkit-text-stroke:0.2px #000;">% COMP</div>
<div class="t" style="left:496px;width:304px;top:777.00px;height:30px;line-height:30px;font-family:'Liberation Mono',monospace;font-size:12.4px;font-weight:normal;color:#000;text-align:left;">Building Replacement Cost New</div>
<div style="left:848px;top:617px;width:199px;height:13px;background:#f7f7fd"></div>
<div style="left:848px;top:645px;width:199px;height:13px;background:#f7f7fd"></div>
<div style="left:848px;top:593px;width:199px;height:9px;background:#add8e6"></div>
<div class="t" style="left:848px;width:199px;top:583.00px;height:30px;line-height:30px;font-family:'Liberation Sans',sans-serif;font-size:8.3px;font-weight:normal;color:#000;text-align:center;letter-spacing:-0.25px;word-spacing:0.9px;-webkit-text-stroke:0.2px #000;">BUILDING VALUE SUMMARY</div>
<div style="left:847px;top:592px;width:201px;height:1px;background:#000"></div>
<div style="left:847px;top:672px;width:201px;height:1px;background:#000"></div>
<div style="left:847px;top:592px;width:1px;height:81px;background:#000"></div>
<div style="left:1047px;top:592px;width:1px;height:81px;background:#000"></div>
<div style="left:847px;top:602px;width:201px;height:1px;background:#000"></div>
<div style="left:847px;top:616px;width:201px;height:1px;background:#000"></div>
<div style="left:847px;top:630px;width:201px;height:1px;background:#000"></div>
<div style="left:847px;top:644px;width:201px;height:1px;background:#000"></div>
<div style="left:847px;top:658px;width:201px;height:1px;background:#000"></div>
<div style="left:946px;top:602px;width:2px;height:71px;background:#000"></div>
<div style="left:946px;top:629px;width:102px;height:3px;background:#000"></div>
<div style="left:946px;top:657px;width:102px;height:3px;background:#000"></div>
<div class="t" style="left:849px;width:97px;top:595.50px;height:30px;line-height:30px;font-family:'Liberation Mono',monospace;font-size:9.7px;font-weight:bold;color:#000;text-align:left;">RPCN</div>
<div class="t" style="left:950px;width:94px;top:596.00px;height:30px;line-height:30px;font-family:'Liberation Mono',monospace;font-size:12.5px;font-weight:normal;color:#000;text-align:right;">$0</div>
<div class="t" style="left:849px;width:97px;top:609.50px;height:30px;line-height:30px;font-family:'Liberation Mono',monospace;font-size:9.7px;font-weight:bold;color:#000;text-align:left;">DEP</div>
<div class="t" style="left:949px;width:31px;top:609.00px;height:30px;line-height:30px;font-family:'Liberation Mono',monospace;font-size:12.5px;font-weight:normal;color:#000;text-align:left;">&#8211;</div>
<div class="t" style="left:950px;width:94px;top:610.00px;height:30px;line-height:30px;font-family:'Liberation Mono',monospace;font-size:12.5px;font-weight:normal;color:#000;text-align:right;">$0</div>
<div class="t" style="left:849px;width:97px;top:623.50px;height:30px;line-height:30px;font-family:'Liberation Mono',monospace;font-size:9.7px;font-weight:bold;color:#000;text-align:left;">RCLND</div>
<div class="t" style="left:950px;width:94px;top:624.00px;height:30px;line-height:30px;font-family:'Liberation Mono',monospace;font-size:12.5px;font-weight:normal;color:#000;text-align:right;">$0</div>
<div class="t" style="left:849px;width:97px;top:637.50px;height:30px;line-height:30px;font-family:'Liberation Mono',monospace;font-size:9.7px;font-weight:bold;color:#000;text-align:left;">OBS F/E</div>
<div class="t" style="left:949px;width:31px;top:637.00px;height:30px;line-height:30px;font-family:'Liberation Mono',monospace;font-size:12.5px;font-weight:normal;color:#000;text-align:left;">&#8211;</div>
<div class="t" style="left:950px;width:94px;top:638.00px;height:30px;line-height:30px;font-family:'Liberation Mono',monospace;font-size:12.5px;font-weight:normal;color:#000;text-align:right;">$0</div>
<div class="t" style="left:849px;width:97px;top:651.50px;height:30px;line-height:30px;font-family:'Liberation Mono',monospace;font-size:9.7px;font-weight:bold;color:#000;text-align:left;">LCF</div>
<div class="t" style="left:950px;width:94px;top:652.00px;height:30px;line-height:30px;font-family:'Liberation Mono',monospace;font-size:12.5px;font-weight:normal;color:#000;text-align:right;">$0</div>
<div class="t" style="left:900px;width:44px;top:652.00px;height:30px;line-height:30px;font-family:'Liberation Mono',monospace;font-size:12.5px;font-weight:normal;color:#000;text-align:right;">100%</div>
<div style="left:848px;top:682px;width:199px;height:19px;background:#ffff00"></div>
<div style="left:848px;top:716px;width:199px;height:13px;background:#f7f7fd"></div>
<div style="left:848px;top:744px;width:199px;height:13px;background:#f7f7fd"></div>
<div style="left:848px;top:758px;width:199px;height:13px;background:#f7f7fd"></div>
<div style="left:847px;top:681px;width:201px;height:1px;background:#000"></div>
<div style="left:847px;top:799px;width:201px;height:1px;background:#000"></div>
<div style="left:847px;top:681px;width:1px;height:119px;background:#000"></div>
<div style="left:1047px;top:681px;width:1px;height:119px;background:#000"></div>
<div style="left:847px;top:701px;width:201px;height:1px;background:#000"></div>
<div style="left:847px;top:715px;width:201px;height:1px;background:#000"></div>
<div style="left:847px;top:729px;width:201px;height:1px;background:#000"></div>
<div style="left:847px;top:743px;width:201px;height:1px;background:#000"></div>
<div style="left:847px;top:757px;width:201px;height:1px;background:#000"></div>
<div style="left:946px;top:701px;width:2px;height:71px;background:#000"></div>
<div style="left:946px;top:742px;width:102px;height:3px;background:#000"></div>
<div style="left:847px;top:771px;width:56px;height:1px;background:#000"></div>
<div style="left:902px;top:771px;width:146px;height:3px;background:#000"></div>
<div class="t" style="left:848px;width:199px;top:677.00px;height:30px;line-height:30px;font-family:'Liberation Mono',monospace;font-size:14px;font-weight:bold;color:#000;text-align:center;">PARCEL SUMMARY</div>
<div class="t" style="left:849px;width:97px;top:694.50px;height:30px;line-height:30px;font-family:'Liberation Mono',monospace;font-size:9.7px;font-weight:bold;color:#000;text-align:left;">TOTAL BLDG VALUE</div>
<div class="t" style="left:950px;width:94px;top:695.00px;height:30px;line-height:30px;font-family:'Liberation Mono',monospace;font-size:12.5px;font-weight:normal;color:#000;text-align:right;">$0</div>
<div class="t" style="left:849px;width:97px;top:708.50px;height:30px;line-height:30px;font-family:'Liberation Mono',monospace;font-size:9.7px;font-weight:bold;color:#000;text-align:left;">OBLDG VALUE</div>
<div class="t" style="left:949px;width:31px;top:708.00px;height:30px;line-height:30px;font-family:'Liberation Mono',monospace;font-size:12.5px;font-weight:normal;color:#000;text-align:left;">+</div>
<div class="t" style="left:950px;width:94px;top:709.00px;height:30px;line-height:30px;font-family:'Liberation Mono',monospace;font-size:12.5px;font-weight:normal;color:#000;text-align:right;">$0</div>
<div class="t" style="left:849px;width:97px;top:722.50px;height:30px;line-height:30px;font-family:'Liberation Mono',monospace;font-size:9.7px;font-weight:bold;color:#000;text-align:left;">LAND VALUE</div>
<div class="t" style="left:949px;width:31px;top:722.00px;height:30px;line-height:30px;font-family:'Liberation Mono',monospace;font-size:12.5px;font-weight:normal;color:#000;text-align:left;">+</div>
<div class="t" style="left:950px;width:94px;top:723.00px;height:30px;line-height:30px;font-family:'Liberation Mono',monospace;font-size:12.5px;font-weight:normal;color:#000;text-align:right;">$55,100</div>
<div class="t" style="left:849px;width:97px;top:736.50px;height:30px;line-height:30px;font-family:'Liberation Mono',monospace;font-size:9.7px;font-weight:bold;color:#000;text-align:left;">APPRAISED VALUE</div>
<div class="t" style="left:950px;width:94px;top:737.00px;height:30px;line-height:30px;font-family:'Liberation Mono',monospace;font-size:12.5px;font-weight:normal;color:#000;text-align:right;">$55,100</div>
<div class="t" style="left:849px;width:97px;top:750.50px;height:30px;line-height:30px;font-family:'Liberation Mono',monospace;font-size:9.7px;font-weight:bold;color:#000;text-align:left;">DEFERRED VALUE</div>
<div class="t" style="left:949px;width:31px;top:750.00px;height:30px;line-height:30px;font-family:'Liberation Mono',monospace;font-size:12.5px;font-weight:normal;color:#000;text-align:left;">&#8211;</div>
<div class="t" style="left:950px;width:94px;top:751.00px;height:30px;line-height:30px;font-family:'Liberation Mono',monospace;font-size:12.5px;font-weight:normal;color:#000;text-align:right;">$33,060</div>
<div style="left:903px;top:774px;width:144px;height:25px;background:#ffff00"></div>
<div style="left:902px;top:771px;width:1px;height:29px;background:#000"></div>
<div class="t" style="left:848px;width:54px;top:764.50px;height:30px;line-height:30px;font-family:'Liberation Mono',monospace;font-size:9.3px;font-weight:bold;color:#000;text-align:center;">TAXABLE</div>
<div class="t" style="left:848px;width:54px;top:774.50px;height:30px;line-height:30px;font-family:'Liberation Mono',monospace;font-size:9.3px;font-weight:bold;color:#000;text-align:center;">VALUE</div>
<div class="t" style="left:903px;width:142px;top:769.00px;height:30px;line-height:30px;font-family:'Liberation Sans',sans-serif;font-size:19.8px;font-weight:bold;color:#e00000;text-align:right;">$22,040</div>
</body></html>
